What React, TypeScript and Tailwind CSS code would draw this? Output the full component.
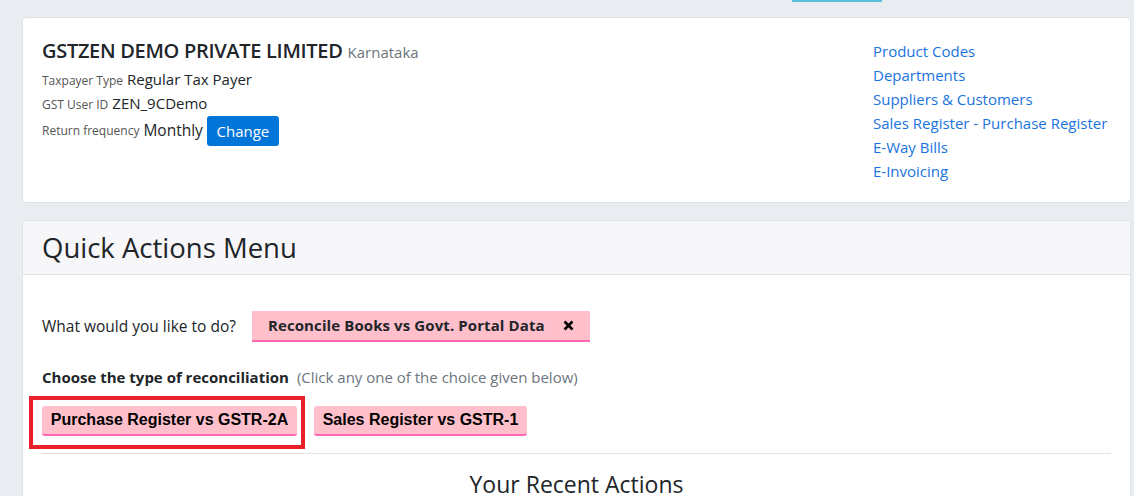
const links = [
  "Product Codes",
  "Departments",
  "Suppliers & Customers",
  "Sales Register - Purchase Register",
  "E-Way Bills",
  "E-Invoicing",
];

const pinkBtn =
  "h-[30px] rounded-[3px] border-b-2 border-[#ff69b4] bg-[#ffc0cb] font-['Liberation_Sans',Arial,sans-serif] text-[16px] font-bold text-black";

const App: React.FC = () => {
  return (
    <div className="h-[496px] overflow-hidden bg-[#e9edf2] pr-[3px] pl-[22px] font-['Open_Sans',sans-serif] text-[#212529]">
      <div className="ml-[770px] h-[2px] w-[90px] bg-[#5bc0de]" />
      <div className="mt-[15px] flex h-[186px] justify-between rounded border border-[#dfe3e8] bg-white pt-[18px] pr-5 pl-[19px]">
        <div className="flex flex-col">
          <div className="flex h-[28px] items-baseline gap-[5px]">
            <span className="text-[20px] font-semibold tracking-[-0.3px]">GSTZEN DEMO PRIVATE LIMITED</span>
            <span className="text-[15px] text-[#6c757d]">Karnataka</span>
          </div>
          <div className="mt-[4px] flex h-[24px] items-baseline gap-[4px]">
            <span className="text-[12px] text-[#555]">Taxpayer Type</span>
            <span className="text-[15px]">Regular Tax Payer</span>
          </div>
          <div className="flex h-[24px] items-baseline gap-[4px]">
            <span className="text-[12px] text-[#555]">GST User ID</span>
            <span className="text-[15px]">ZEN_9CDemo</span>
          </div>
          <div className="flex h-[30px] items-center gap-[4px]">
            <span className="text-[12px] text-[#555]">Return frequency</span>
            <span className="text-[15.5px]">Monthly</span>
            <button className="h-[30px] w-[72px] rounded-[3px] bg-[#0275d8] text-[15px] text-white">
              Change
            </button>
          </div>
        </div>
        <div className="flex w-[237px] flex-col pt-[3px]">
          {links.map((l) => (
            <a key={l} className="whitespace-nowrap text-[15px] leading-[24px] text-[#1a73e0]">
              {l}
            </a>
          ))}
        </div>
      </div>

      <div className="mt-[17px] rounded border border-[#dfe3e8] bg-white">
        <div className="flex h-[54px] items-center rounded-t border-b border-[#dfe3e8] bg-[#f7f7f9] px-[19px]">
          <h1 className="text-[27.5px] font-normal">Quick Actions Menu</h1>
        </div>
        <div className="px-[19px] pt-[36px]">
          <div className="flex items-center">
            <span className="mr-[16px] text-[15.5px]">What would you like to do?</span>
            <div className="flex h-[31px] w-[338px] items-center border-b-2 border-[#ff69b4] bg-[#ffc0cb] pl-[16px]">
              <span className="text-[15px] font-bold tracking-[0.1px]">Reconcile Books vs Govt. Portal Data</span>
              <svg className="ml-[18px]" width="11" height="11" viewBox="0 0 11 11">
                <path d="M1.5 1.5 L9.5 9.5 M9.5 1.5 L1.5 9.5" stroke="#000" strokeWidth="2.6" />
              </svg>
            </div>
          </div>
          <div className="mt-[24px] text-[15px]">
            <span className="font-bold">Choose the type of reconciliation</span>
            <span className="ml-[8px] text-[#6c757d]">(Click any one of the choice given below)</span>
          </div>
          <div className="mt-[7px] -ml-[13px] flex items-start gap-[9px]">
            <div className="border-[4px] border-[#e8202a] pt-[6px] pr-[4px] pb-[9px] pl-[9px]">
              <button className={`${pinkBtn} w-[255px]`}>Purchase Register vs GSTR-2A</button>
            </div>
            <button className={`${pinkBtn} mt-[10px] w-[213px]`}>Sales Register vs GSTR-1</button>
          </div>
          <div className="mt-[4px] border-t border-[#e3e3e3]" />
          <div className="pt-[13px] text-center text-[23px]">Your Recent Actions</div>
        </div>
      </div>
    </div>
  );
};

export default App;
